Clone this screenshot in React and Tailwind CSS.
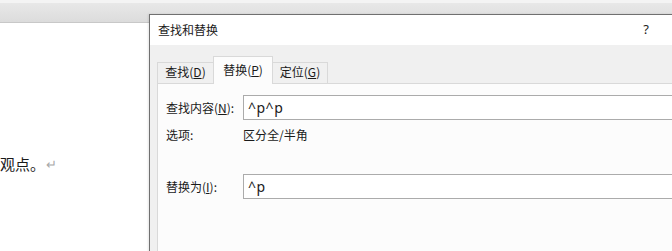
export default function App() {
  const cjk = { fontFamily: '"Noto Sans CJK SC", "Noto Sans", sans-serif' };
  const latin = { fontFamily: '"Noto Sans", "Noto Sans CJK SC", sans-serif' };

  return (
    <div className="relative w-[672px] h-[251px] overflow-hidden bg-white text-[#1a1a1a]" style={cjk}>
      {/* document window behind */}
      <div className="h-[3px] bg-[#f4f4f4]" />
      <div className="h-[20px] bg-gradient-to-b from-[#e8e8e8] to-[#dcdcdc] border-b border-[#c8c8c8]" />
      <div className="pt-[131px] text-[15px] leading-[20px] flex items-center">
        <span>观点。</span>
        <span className="ml-[1px] text-[13px] text-[#a8a8a8]">↵</span>
      </div>

      {/* dialog */}
      <div className="absolute left-[149px] top-[14px] w-[560px] h-[260px] border-l border-t border-[#707070] bg-[#f0f0f0] shadow-[-1px_0_2px_rgba(0,0,0,0.1)]">
        <div className="h-[30px] bg-white flex items-center justify-between pl-[8px] pr-[60px] text-[12px]">
          <span>查找和替换</span>
          <span style={latin} className="text-[13px]">?</span>
        </div>

        <div className="px-[7px] pt-[10px]">
          <div className="flex items-end h-[28px] text-[12px]">
            <div className="w-[56px] h-[21px] pb-[2px] flex items-center justify-center border-l border-t border-[#d9d9d9] bg-[#f0f0f0]">
              查找(<span className="underline">D</span>)
            </div>
            <div className="w-[60px] h-[28px] pb-[5px] flex items-end justify-center border-l border-t border-r border-[#d9d9d9] bg-[#fcfcfc] relative z-10 -mb-px">
              替换(<span className="underline">P</span>)
            </div>
            <div className="w-[55px] h-[21px] pb-[2px] flex items-center justify-center border-t border-r border-[#d9d9d9] bg-[#f0f0f0]">
              定位(<span className="underline">G</span>)
            </div>
          </div>

          <div className="border border-[#d9d9d9] bg-[#fcfcfc] h-[200px] pl-[8px] pt-[11px] text-[12px]">
            <div className="flex items-center h-[25px]">
              <span className="w-[77px]">查找内容(<span className="underline">N</span>):</span>
              <div className="flex-1 h-[25px] border border-[#ababab] bg-white flex items-center pl-[4px] text-[14px] tracking-[0.5px]" style={latin}>
                ^p^p
              </div>
            </div>
            <div className="flex items-center h-[16px] mt-[7px]">
              <span className="w-[77px]">选项:</span>
              <span>区分全/半角</span>
            </div>
            <div className="flex items-center h-[25px] mt-[31px]">
              <span className="w-[77px]">替换为(<span className="underline">I</span>):</span>
              <div className="flex-1 h-[25px] border border-[#ababab] bg-white flex items-center pl-[4px] text-[14px] tracking-[0.5px]" style={latin}>
                ^p
              </div>
            </div>
          </div>
        </div>
      </div>
    </div>
  );
}
